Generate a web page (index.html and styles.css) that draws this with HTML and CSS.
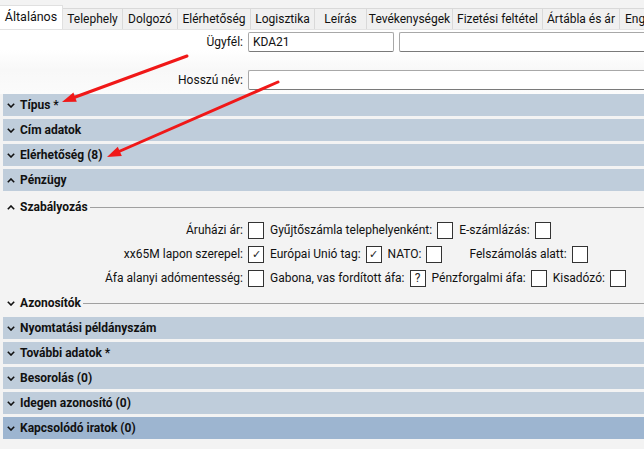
FILE: index.html
```html
<!DOCTYPE html>
<html lang="hu">
<head>
<meta charset="utf-8">
<title>Általános</title>
<link rel="stylesheet" href="styles.css">
</head>
<body>
<div class="tabs">
  <div class="tab active t-alt">Általános</div>
  <div class="tab t-tel">Telephely</div>
  <div class="tab t-dol">Dolgozó</div>
  <div class="tab t-ele">Elérhetőség</div>
  <div class="tab t-log">Logisztika</div>
  <div class="tab t-lei">Leírás</div>
  <div class="tab t-tev">Tevékenységek</div>
  <div class="tab t-fiz">Fizetési feltétel</div>
  <div class="tab t-art">Ártábla és ár</div>
  <div class="tab t-eng">Engedmények</div>
</div>

<div class="form">
  <div class="flabel">Ügyfél:</div>
  <div class="frow">
    <div class="input short">KDA21</div>
    <div class="input grow"></div>
  </div>
  <div class="flabel">Hosszú név:</div>
  <div class="frow">
    <div class="input grow"></div>
  </div>
</div>

<div class="panel">
  <div class="sec"><svg class="chev" viewBox="0 0 8 5"><polyline points="0.8,0.8 4,4 7.2,0.8"/></svg>Típus *</div>
  <div class="sec"><svg class="chev" viewBox="0 0 8 5"><polyline points="0.8,0.8 4,4 7.2,0.8"/></svg>Cím adatok</div>
  <div class="sec"><svg class="chev" viewBox="0 0 8 5"><polyline points="0.8,0.8 4,4 7.2,0.8"/></svg>Elérhetőség (8)</div>
  <div class="sec"><svg class="chev" viewBox="0 0 8 5"><polyline points="0.8,4.2 4,1 7.2,4.2"/></svg>Pénzügy</div>

  <div class="group g1">
    <svg class="chev" viewBox="0 0 8 5"><polyline points="0.8,4.2 4,1 7.2,4.2"/></svg>
    <span class="gtitle">Szabályozás</span>
    <span class="gline"></span>
  </div>
  <div class="crows">
    <div class="crow">
      <span class="pair"><span class="lbl first">Áruházi ár:</span><span class="cb"></span></span>
      <span class="pair"><span class="lbl">Gyűjtőszámla telephelyenként:</span><span class="cb"></span></span>
      <span class="pair"><span class="lbl">E-számlázás:</span><span class="cb"></span></span>
    </div>
    <div class="crow">
      <span class="pair"><span class="lbl first">xx65M lapon szerepel:</span><span class="cb">✓</span></span>
      <span class="pair"><span class="lbl">Európai Unió tag:</span><span class="cb">✓</span></span>
      <span class="pair"><span class="lbl">NATO:</span><span class="cb"></span></span>
      <span class="pair wide"><span class="lbl">Felszámolás alatt:</span><span class="cb"></span></span>
    </div>
    <div class="crow">
      <span class="pair"><span class="lbl first">Áfa alanyi adómentesség:</span><span class="cb"></span></span>
      <span class="pair"><span class="lbl">Gabona, vas fordított áfa:</span><span class="cb q">?</span></span>
      <span class="pair"><span class="lbl">Pénzforgalmi áfa:</span><span class="cb"></span></span>
      <span class="pair"><span class="lbl">Kisadózó:</span><span class="cb"></span></span>
    </div>
  </div>

  <div class="group g2">
    <svg class="chev" viewBox="0 0 8 5"><polyline points="0.8,0.8 4,4 7.2,0.8"/></svg>
    <span class="gtitle">Azonosítók</span>
    <span class="gline"></span>
  </div>

  <div class="sec"><svg class="chev" viewBox="0 0 8 5"><polyline points="0.8,0.8 4,4 7.2,0.8"/></svg>Nyomtatási példányszám</div>
  <div class="sec"><svg class="chev" viewBox="0 0 8 5"><polyline points="0.8,0.8 4,4 7.2,0.8"/></svg>További adatok *</div>
  <div class="sec"><svg class="chev" viewBox="0 0 8 5"><polyline points="0.8,0.8 4,4 7.2,0.8"/></svg>Besorolás (0)</div>
  <div class="sec"><svg class="chev" viewBox="0 0 8 5"><polyline points="0.8,0.8 4,4 7.2,0.8"/></svg>Idegen azonosító (0)</div>
  <div class="sec hover"><svg class="chev" viewBox="0 0 8 5"><polyline points="0.8,0.8 4,4 7.2,0.8"/></svg>Kapcsolódó iratok (0)</div>
</div>

<svg class="arrows" viewBox="0 0 644 449" width="644" height="449">
  <line x1="187" y1="56" x2="74" y2="97.5"/>
  <polygon points="62,102 76.8,101.8 73.4,92.4"/>
  <line x1="278" y1="82" x2="119" y2="151.5"/>
  <polygon points="107,157 121.8,155.9 117.8,146.8"/>
</svg>
</body>
</html>
```

FILE: styles.css
```css
* { box-sizing: border-box; }
html, body { margin: 0; padding: 0; }
body {
  width: 644px;
  height: 449px;
  overflow: hidden;
  position: relative;
  background: #f3f3f3;
  font-family: Roboto, "Liberation Sans", sans-serif;
  font-size: 12px;
  color: #111;
}

/* tabs */
.tabs {
  display: flex;
  align-items: flex-end;
  height: 30px;
  padding-top: 8px;
  background: #f3f3f3;
  border-bottom: 1px solid #e3e3e3;
  white-space: nowrap;
  font-size: 12px;
  overflow: hidden;
}
.tab {
  height: 21px;
  line-height: 20px;
  text-align: center;
  padding: 0;
  background: #f0f0f0;
  border: 1px solid #d9d9d9;
  border-left: none;
  border-bottom: none;
  flex: none;
}
.tab.active {
  height: 25px;
  line-height: 22px;
  font-size: 12.5px;
  background: #fff;
  border-color: #e0e0e0;
  margin-bottom: -1px;
}
.t-alt { width: 63px; }
.t-tel { width: 60px; }
.t-dol { width: 55px; }
.t-ele { width: 73px; }
.t-log { width: 64px; }
.t-lei { width: 52px; }
.t-tev { width: 86px; }
.t-fiz { width: 90px; }
.t-art { width: 77px; }
.t-eng { width: 80px; text-align: left; padding-left: 5px; }

/* form */
.form {
  display: grid;
  grid-template-columns: 243px 1fr;
  column-gap: 5px;
  row-gap: 18px;
  padding: 2px 0 4px;
  background: linear-gradient(#fff 0, #fff 20px, #f8f8f8 40px, #fbfbfb 100%);
}
.flabel {
  text-align: right;
  line-height: 20px;
}
.frow {
  display: flex;
  gap: 5px;
}
.input {
  height: 20px;
  line-height: 18px;
  padding: 0 4px;
  background: #fff;
  border: 1px solid #a8a8a8;
  border-bottom-color: #7a7a7a;
  border-radius: 2px;
}
.input.short { width: 146px; flex: none; }
.input.grow { flex: 1; border-right: none; border-radius: 2px 0 0 2px; }

/* sections */
.panel { padding-top: 0; }
.sec {
  height: 22px;
  margin: 0 0 3px 3px;
  padding-left: 4px;
  display: flex;
  align-items: center;
  gap: 5px;
  background: #bfcddb;
  font-weight: bold;
  color: #111;
}
.sec.hover { background: #9db5d0; }
.chev {
  width: 8px;
  height: 5px;
  flex: none;
  fill: none;
  stroke: #111;
  stroke-width: 1.6;
}

.group {
  display: flex;
  align-items: center;
  height: 16px;
  margin-left: 3px;
  padding-left: 4px;
  gap: 5px;
  font-weight: bold;
}
.group.g1 { margin-top: 8px; }
.group.g2 { margin-top: 5px; margin-bottom: 6px; }
.gtitle { flex: none; }
.gline {
  flex: 1;
  height: 1px;
  background: #a0a0a0;
  margin-left: -3px;
}

/* check rows */
.crows { padding-top: 3px; }
.crow {
  display: flex;
  align-items: center;
  height: 24px;
  gap: 6px;
  white-space: nowrap;
}
.pair {
  display: flex;
  align-items: center;
  gap: 5px;
}
.pair.wide { margin-left: 21px; }
.lbl.first {
  width: 243px;
  text-align: right;
}
.cb {
  width: 16px;
  height: 17px;
  flex: none;
  background: #fff;
  border: 1px solid #333;
  display: flex;
  align-items: center;
  justify-content: center;
  font-size: 11px;
  line-height: 1;
  color: #222;
}
.cb.q { font-size: 12px; }

/* annotation arrows */
.arrows {
  position: absolute;
  left: 0;
  top: 0;
  pointer-events: none;
}
.arrows line {
  stroke: #f01818;
  stroke-width: 3;
  stroke-linecap: round;
}
.arrows polygon { fill: #f01818; }
```
